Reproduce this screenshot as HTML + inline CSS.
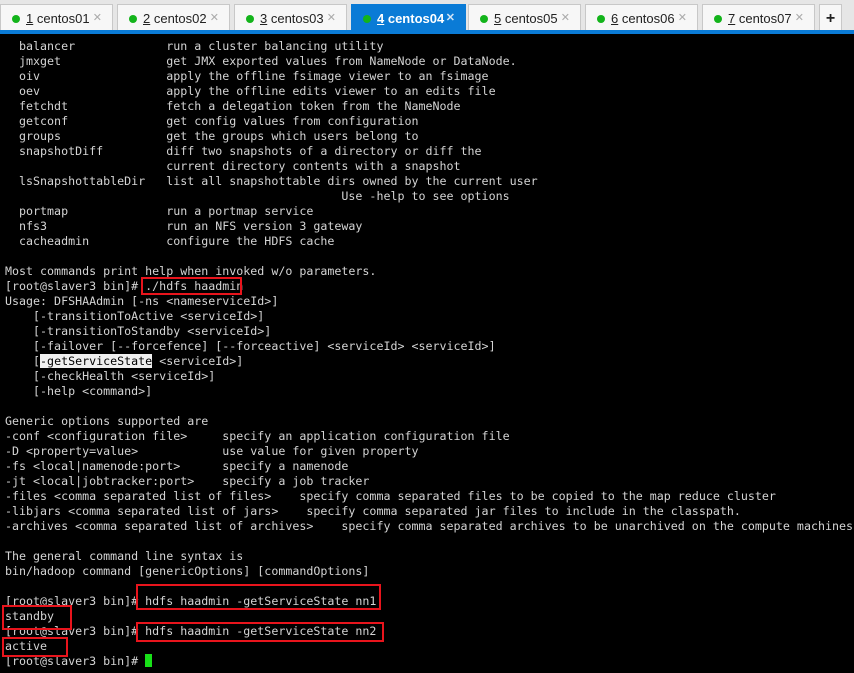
<!DOCTYPE html>
<html><head><meta charset="utf-8"><style>
body{margin:0;width:854px;height:673px;background:#000;overflow:hidden;position:relative;font-family:"Liberation Sans",sans-serif}
#bar{position:absolute;left:0;top:0;width:854px;height:30px;background:#e6e6e6}
#line{position:absolute;left:0;top:30px;width:854px;height:4px;background:#0a7bd6}
.tab{position:absolute;top:4px;height:26px;width:113px;background:#f7f7f7;border:1px solid #c8c8c8;border-bottom:none;box-sizing:border-box;font-size:13px;color:#222;line-height:27px}
.tab .d{position:absolute;left:11px;top:10px;width:8px;height:8px;border-radius:50%;background:#13b41b}
.tab .t{position:absolute;left:25px}
.tab .x{position:absolute;right:10px;color:#aaa;font-size:11px}
.tab.a{background:#0a7bd6;color:#fff;font-weight:bold;border-color:#0a7bd6}
.tab.a .x{color:#d0e4f6}
pre{position:absolute;left:5px;top:39px;margin:0;font-family:"DejaVu Sans Mono","Liberation Mono",monospace;font-size:11.65px;line-height:15px;color:#d4d4d4}
.hl{background:#f0f0f0;color:#000}
.box{position:absolute;border:2px solid #e8141c;box-sizing:border-box}
</style></head><body>
<div id="bar"></div>
<div class="tab" style="left:0"><span class="d"></span><span class="t"><u>1</u> centos01</span><span class="x">✕</span></div>
<div class="tab" style="left:117px"><span class="d"></span><span class="t"><u>2</u> centos02</span><span class="x">✕</span></div>
<div class="tab" style="left:234px"><span class="d"></span><span class="t"><u>3</u> centos03</span><span class="x">✕</span></div>
<div class="tab a" style="left:351px;width:115px"><span class="d"></span><span class="t"><u>4</u> centos04</span><span class="x">✕</span></div>
<div class="tab" style="left:468px"><span class="d"></span><span class="t"><u>5</u> centos05</span><span class="x">✕</span></div>
<div class="tab" style="left:585px"><span class="d"></span><span class="t"><u>6</u> centos06</span><span class="x">✕</span></div>
<div class="tab" style="left:702px"><span class="d"></span><span class="t"><u>7</u> centos07</span><span class="x">✕</span></div>
<div class="tab" style="left:819px;width:23px;text-align:center;font-weight:bold;font-size:16px">+</div>
<div id="line"></div>
<pre>  balancer             run a cluster balancing utility
  jmxget               get JMX exported values from NameNode or DataNode.
  oiv                  apply the offline fsimage viewer to an fsimage
  oev                  apply the offline edits viewer to an edits file
  fetchdt              fetch a delegation token from the NameNode
  getconf              get config values from configuration
  groups               get the groups which users belong to
  snapshotDiff         diff two snapshots of a directory or diff the
                       current directory contents with a snapshot
  lsSnapshottableDir   list all snapshottable dirs owned by the current user
                                                Use -help to see options
  portmap              run a portmap service
  nfs3                 run an NFS version 3 gateway
  cacheadmin           configure the HDFS cache

Most commands print help when invoked w/o parameters.
[root@slaver3 bin]# ./hdfs haadmin
Usage: DFSHAAdmin [-ns &lt;nameserviceId&gt;]
    [-transitionToActive &lt;serviceId&gt;]
    [-transitionToStandby &lt;serviceId&gt;]
    [-failover [--forcefence] [--forceactive] &lt;serviceId&gt; &lt;serviceId&gt;]
    [<span class="hl">-getServiceState</span> &lt;serviceId&gt;]
    [-checkHealth &lt;serviceId&gt;]
    [-help &lt;command&gt;]

Generic options supported are
-conf &lt;configuration file&gt;     specify an application configuration file
-D &lt;property=value&gt;            use value for given property
-fs &lt;local|namenode:port&gt;      specify a namenode
-jt &lt;local|jobtracker:port&gt;    specify a job tracker
-files &lt;comma separated list of files&gt;    specify comma separated files to be copied to the map reduce cluster
-libjars &lt;comma separated list of jars&gt;    specify comma separated jar files to include in the classpath.
-archives &lt;comma separated list of archives&gt;    specify comma separated archives to be unarchived on the compute machines

The general command line syntax is
bin/hadoop command [genericOptions] [commandOptions]

[root@slaver3 bin]# hdfs haadmin -getServiceState nn1
standby
[root@slaver3 bin]# hdfs haadmin -getServiceState nn2
active
[root@slaver3 bin]# </pre>
<div style="position:absolute;left:145px;top:654px;width:7px;height:13px;background:#18e018"></div>
<div class="box" style="left:141px;top:277px;width:101px;height:18px"></div>
<div class="box" style="left:136px;top:584px;width:245px;height:26px"></div>
<div class="box" style="left:2px;top:605px;width:70px;height:25px"></div>
<div class="box" style="left:136px;top:622px;width:248px;height:20px"></div>
<div class="box" style="left:2px;top:637px;width:66px;height:20px"></div>
</body></html>
